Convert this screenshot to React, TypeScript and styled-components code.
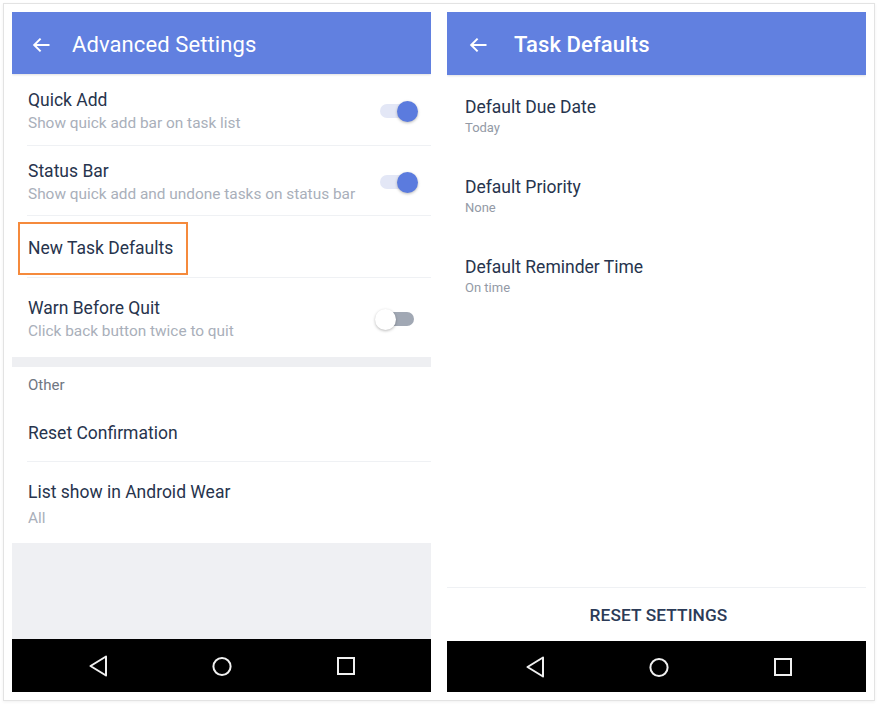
import React from "react";
import styled, { createGlobalStyle } from "styled-components";

const GlobalStyle = createGlobalStyle`
  html, body { margin: 0; padding: 0; background: #ffffff; }
  body { font-family: Roboto, "Liberation Sans", Arial, sans-serif; -webkit-font-smoothing: antialiased; }
  * { box-sizing: border-box; }
`;

const Page = styled.div`
  padding: 3px;
`;

const Card = styled.div`
  width: 872px;
  height: 698px;
  border: 1px solid #e3e3e3;
  box-shadow: 0 1px 3px rgba(0, 0, 0, 0.06);
  background: #fff;
  padding: 8px;
  display: flex;
  gap: 16px;
`;

const Panel = styled.div`
  width: 419px;
  height: 680px;
  display: flex;
  flex-direction: column;
  background: #fff;
  overflow: hidden;
`;

const Header = styled.div<{ $h: number; $pl: number; $gap: number }>`
  height: ${(p) => p.$h}px;
  flex: none;
  background: #6180e0;
  display: flex;
  align-items: center;
  padding: 3px 0 0 ${(p) => p.$pl}px;
  gap: ${(p) => p.$gap}px;
  color: #fff;
  box-shadow: 0 1px 2px rgba(0, 0, 0, 0.12);
  position: relative;
  z-index: 1;
`;

const HeaderTitle = styled.div<{ $weight: number }>`
  font-size: 22px;
  line-height: 26px;
  font-weight: ${(p) => p.$weight};
  letter-spacing: 0.1px;
`;

const Row = styled.div<{ $pt: number; $pb: number; $pl: number }>`
  display: flex;
  align-items: center;
  padding: ${(p) => p.$pt}px 17px ${(p) => p.$pb}px ${(p) => p.$pl}px;
  position: relative;
  flex: none;
`;

const TextBlock = styled.div<{ $gap: number }>`
  display: flex;
  flex-direction: column;
  gap: ${(p) => p.$gap}px;
`;

const Title = styled.div`
  font-size: 17.5px;
  line-height: 22px;
  color: #27344d;
  white-space: nowrap;
`;

const Sub = styled.div<{ $size: number; $lh: number; $color: string }>`
  font-size: ${(p) => p.$size}px;
  line-height: ${(p) => p.$lh}px;
  color: ${(p) => p.$color};
  white-space: nowrap;
`;

const Divider = styled.div<{ $inset: number }>`
  height: 1px;
  flex: none;
  margin-left: ${(p) => p.$inset}px;
  background: #eff1f4;
`;

const Band = styled.div`
  height: 10px;
  flex: none;
  background: #eeeff2;
`;

const SectionLabel = styled.div`
  padding: 8px 16px 5px;
  font-size: 15px;
  line-height: 20px;
  color: #6f7682;
  flex: none;
`;

const Highlight = styled.div`
  position: absolute;
  left: 6px;
  top: 6px;
  width: 170px;
  height: 53px;
  border: 2px solid #f58a3c;
  pointer-events: none;
`;

const Track = styled.span<{ $on: boolean }>`
  margin-left: auto;
  position: relative;
  width: 34px;
  height: 14px;
  border-radius: 7px;
  background: ${(p) => (p.$on ? "#e3e7f6" : "#a1a8b4")};
  flex: none;
`;

const Thumb = styled.span<{ $on: boolean }>`
  position: absolute;
  top: -3.5px;
  left: ${(p) => (p.$on ? 17 : -5)}px;
  width: 21px;
  height: 21px;
  border-radius: 50%;
  background: ${(p) => (p.$on ? "#5b7bde" : "#ffffff")};
  box-shadow: 0 1px 3px rgba(0, 0, 0, 0.28);
`;

const Filler = styled.div<{ $bg: string }>`
  flex: 1;
  background: ${(p) => p.$bg};
`;

const Footer = styled.div`
  height: 53px;
  flex: none;
  display: flex;
  align-items: center;
  justify-content: center;
  padding-left: 4px;
  font-size: 17.3px;
  font-weight: 500;
  color: #2c3b57;
  letter-spacing: 0.1px;
`;

const NavBar = styled.div<{ $h: number; $shift: number }>`
  height: ${(p) => p.$h}px;
  flex: none;
  background: #000;
  display: flex;
  align-items: center;
  justify-content: center;
  gap: 104px;
  padding-left: ${(p) => p.$shift}px;
`;

const NavIcon = styled.svg`
  width: 20px;
  height: 24px;
  display: block;
`;

const BackArrow = () => (
  <svg width="18" height="16" viewBox="0 0 18 16" fill="none">
    <path d="M17.5 8H2.2M8.6 1.6L2.2 8l6.4 6.4" stroke="#fff" strokeWidth="2" />
  </svg>
);

const Toggle = ({ on }: { on: boolean }) => (
  <Track $on={on}>
    <Thumb $on={on} />
  </Track>
);

const Nav = ({ h, shift }: { h: number; shift: number }) => (
  <NavBar $h={h} $shift={shift}>
    <NavIcon viewBox="0 0 20 24">
      <path d="M18 2.5L2.5 12L18 21.5Z" fill="none" stroke="#f0f0f0" strokeWidth="2" strokeLinejoin="round" />
    </NavIcon>
    <NavIcon viewBox="0 0 20 24">
      <circle cx="10" cy="12.5" r="8.6" fill="none" stroke="#f0f0f0" strokeWidth="2" />
    </NavIcon>
    <NavIcon viewBox="0 0 20 24">
      <rect x="2" y="4" width="16" height="16" fill="none" stroke="#f0f0f0" strokeWidth="2" />
    </NavIcon>
  </NavBar>
);

const LSUB = "#a9afba";
const RSUB = "#939aa6";

const RightRow = ({ title, sub }: { title: string; sub: string }) => (
  <Row $pt={21} $pb={18} $pl={18}>
    <TextBlock $gap={1}>
      <Title>{title}</Title>
      <Sub $size={13} $lh={18} $color={RSUB}>
        {sub}
      </Sub>
    </TextBlock>
  </Row>
);

export default function App() {
  return (
    <>
      <GlobalStyle />
      <Page>
        <Card>
          <Panel>
            <Header $h={62} $pl={20} $gap={22}>
              <BackArrow />
              <HeaderTitle $weight={400}>Advanced Settings</HeaderTitle>
            </Header>

            <Row $pt={15} $pb={12} $pl={16}>
              <TextBlock $gap={2}>
                <Title>Quick Add</Title>
                <Sub $size={15.4} $lh={20} $color={LSUB}>
                  Show quick add bar on task list
                </Sub>
              </TextBlock>
              <Toggle on />
            </Row>
            <Divider $inset={15} />

            <Row $pt={14} $pb={11} $pl={16}>
              <TextBlock $gap={2}>
                <Title>Status Bar</Title>
                <Sub $size={15.4} $lh={20} $color={LSUB}>
                  Show quick add and undone tasks on status bar
                </Sub>
              </TextBlock>
              <Toggle on />
            </Row>
            <Divider $inset={15} />

            <Row $pt={21} $pb={18} $pl={16}>
              <Title>New Task Defaults</Title>
              <Highlight />
            </Row>
            <Divider $inset={15} />

            <Row $pt={19} $pb={16} $pl={16}>
              <TextBlock $gap={2}>
                <Title>Warn Before Quit</Title>
                <Sub $size={15.4} $lh={20} $color={LSUB}>
                  Click back button twice to quit
                </Sub>
              </TextBlock>
              <Toggle on={false} />
            </Row>

            <Band />
            <SectionLabel>Other</SectionLabel>

            <Row $pt={22} $pb={17} $pl={16}>
              <Title>Reset Confirmation</Title>
            </Row>
            <Divider $inset={15} />

            <Row $pt={19} $pb={15} $pl={16}>
              <TextBlock $gap={5}>
                <Title>List show in Android Wear</Title>
                <Sub $size={15.4} $lh={20} $color={LSUB}>
                  All
                </Sub>
              </TextBlock>
            </Row>

            <Filler $bg="#eff0f3" />
            <Nav h={53} shift={0} />
          </Panel>

          <Panel>
            <Header $h={63} $pl={22} $gap={27}>
              <BackArrow />
              <HeaderTitle $weight={500}>Task Defaults</HeaderTitle>
            </Header>

            <RightRow title="Default Due Date" sub="Today" />
            <RightRow title="Default Priority" sub="None" />
            <RightRow title="Default Reminder Time" sub="On time" />

            <Filler $bg="#ffffff" />
            <Divider $inset={0} />
            <Footer>RESET SETTINGS</Footer>
            <Nav h={51} shift={5} />
          </Panel>
        </Card>
      </Page>
    </>
  );
}
